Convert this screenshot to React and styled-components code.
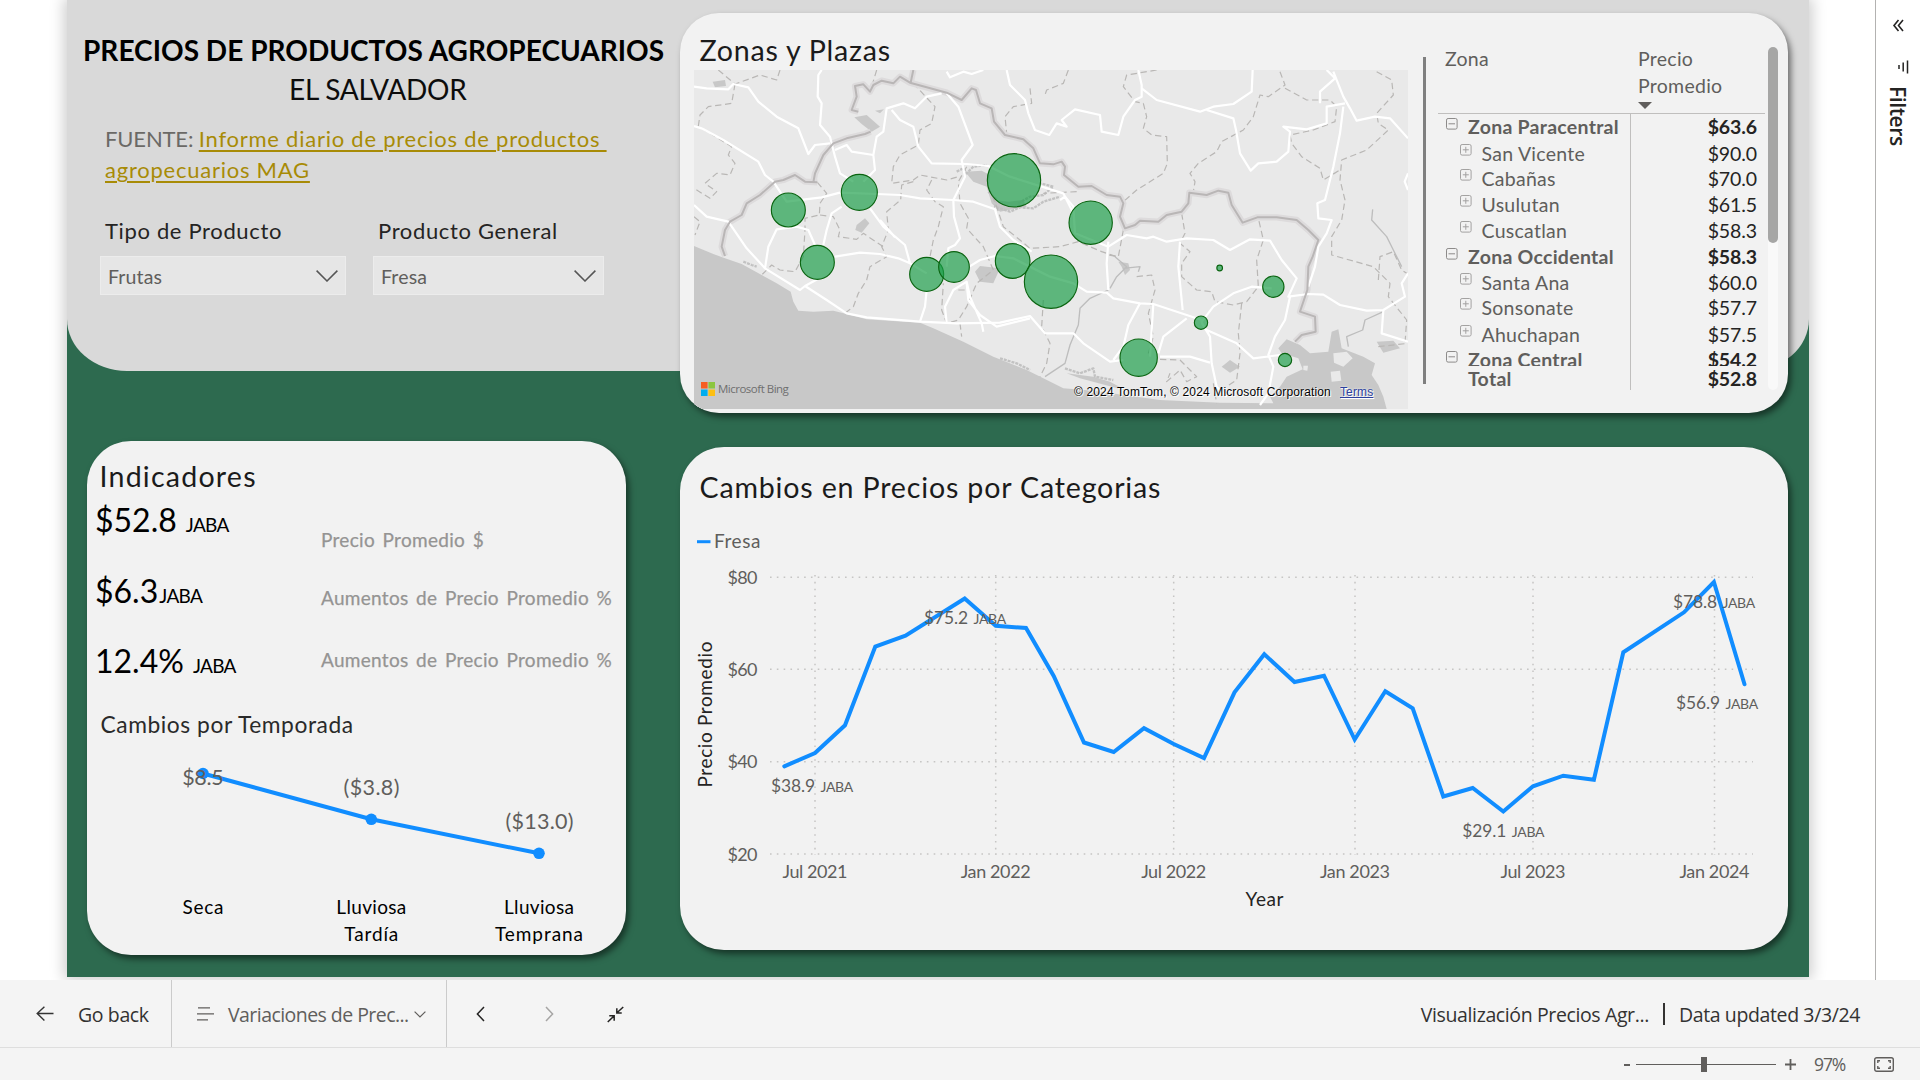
import React from 'react';
import styled, { createGlobalStyle } from 'styled-components';

const GlobalStyle = createGlobalStyle`
  *, *::before { box-sizing: border-box; }
  body { margin: 0; background: #fff; overflow: hidden; font-family: Lato, Carlito, sans-serif; }
  svg { display: block; flex: none; }
`;

/* ---------- page shell ---------- */

const Page = styled.div`
  display: flex;
  flex-direction: column;
  width: 1920px;
  height: 1080px;
`;

const Main = styled.main`
  display: flex;
  justify-content: space-between;
  height: 980px;
  padding-left: 67px;
  overflow: hidden;
`;

const Report = styled.section`
  position: relative;
  display: flex;
  width: 1742px;
  height: 977px;
  background: #2d6a4f;
  box-shadow: 0 0 14px 3px rgba(0, 0, 0, 0.2);

  &::before {
    content: '';
    position: absolute;
    inset: 0 0 auto 0;
    height: 371px;
    background: #d9d9d9;
    border-radius: 0 0 60px 60px / 0 0 52px 52px;
  }
`;

const Column = styled.div`
  position: relative;
  display: flex;
  flex-direction: column;
  width: ${(p) => p.$width}px;
`;

const Card = styled.article`
  background: #f2f2f2;
  border-radius: ${(p) => p.$radius}px;
  box-shadow: 3px 4px 6px rgba(0, 0, 0, 0.5);
  overflow: hidden;
  flex: none;
`;

const CardTitle = styled.h2`
  margin: 0;
  font-size: 28.6px;
  font-weight: 400;
  line-height: 40px;
  color: #1b1b1b;
  white-space: nowrap;
  letter-spacing: ${(p) => p.$track || 0}px;
`;

/* ---------- left column: heading and slicers ---------- */

const ReportTitle = styled.h1`
  margin: 31px 0 0;
  padding-left: 16px;
  font-size: 28px;
  line-height: 39px;
  font-weight: 700;
  color: #000;
  white-space: nowrap;
  letter-spacing: 0.03px;
`;

const Country = styled.div`
  padding-left: 222px;
  font-size: 28px;
  line-height: 39px;
  letter-spacing: -0.25px;
  color: #0c0c0c;
`;

const Source = styled.p`
  margin: 14px 0 0;
  padding-left: 38px;
  font-size: 22px;
  line-height: 31px;
  color: #6b6966;
  letter-spacing: -0.15px;
  white-space: pre;
`;

const SourceLink = styled.a`
  color: #a88b06;
  letter-spacing: 0.76px;
  text-decoration: underline;
  text-decoration-thickness: 1.5px;
  text-underline-offset: 3px;
`;

const Slicers = styled.div`
  display: flex;
  margin-top: 31px;
  padding-left: 33px;
  gap: 27px;
`;

const Slicer = styled.div`
  width: ${(p) => p.$width}px;
`;

const SlicerLabel = styled.div`
  padding-left: 5px;
  font-size: 22px;
  line-height: 30px;
  letter-spacing: 0.65px;
  color: #252423;
`;

const SlicerBox = styled.div`
  display: flex;
  align-items: center;
  justify-content: space-between;
  height: 39px;
  margin-top: 10px;
  padding: 1px 7px 0 7px;
  background: #e6e6e6;
  border: 1px solid #ececec;
  font-size: 19.5px;
  letter-spacing: 0.15px;
  color: #605e5c;
`;

/* ---------- left column: indicators ---------- */

const IndicatorCard = styled(Card)`
  width: 539px;
  height: 514px;
  margin: 146px 0 0 20px;
  padding-top: 15px;
`;

const Inset = styled.div`
  padding-left: ${(p) => p.$left}px;
`;

const Kpis = styled.div`
  display: flex;
  height: 185px;
  padding: 4px 0 0 8px;
`;

const KpiValues = styled.div`
  display: flex;
  flex-direction: column;
  gap: 30.5px;
  width: 226px;
`;

const KpiValue = styled.div`
  height: 40px;
  font-size: 32px;
  line-height: 40px;
  color: #000;
  white-space: nowrap;
`;

const Unit = styled.span`
  margin-left: ${(p) => p.$gap}px;
  font-size: 19px;
  line-height: 1;
  letter-spacing: -0.7px;
`;

const KpiLabels = styled.div`
  padding-top: 26.6px;
`;

const KpiLabel = styled.div`
  font-size: 19px;
  line-height: 26px;
  margin-bottom: ${(p) => p.$after || 0}px;
  color: #959493;
  -webkit-text-stroke: 0.25px #959493;
  letter-spacing: 0.3px;
  word-spacing: 2.4px;
  white-space: nowrap;
`;

const SeasonTitle = styled.h3`
  margin: 27px 0 0;
  padding-left: 13.5px;
  font-size: 22.8px;
  font-weight: 400;
  line-height: 32px;
  letter-spacing: 0.55px;
  color: #2a2a2a;
`;

/* ---------- zones card ---------- */

const ZonesCard = styled(Card)`
  display: flex;
  width: 1108px;
  height: 400px;
  margin-top: 13px;
  padding-left: 14px;
`;

const MapColumn = styled.div`
  width: 714px;
  padding-top: 17px;
`;

const MapFrame = styled.div`
  position: relative;
  width: 714px;
  height: 339px;
  background: #e9e9e9;
`;

const BingMark = styled.div`
  position: absolute;
  left: 7px;
  bottom: 12px;
  display: flex;
  align-items: center;
  gap: 3px;
  height: 17px;
  font-family: 'Open Sans', sans-serif;
  font-size: 11.5px;
  letter-spacing: -0.5px;
  color: #6f6f6f;
  white-space: nowrap;
`;

const Credits = styled.div`
  position: absolute;
  left: 380px;
  bottom: 7px;
  display: flex;
  gap: 9px;
  font-family: 'Liberation Sans', Arial, sans-serif;
  font-size: 12px;
  line-height: 20px;
  letter-spacing: 0.14px;
  color: #000;
  white-space: nowrap;
  text-shadow: 0 0 2px #fff, 1px 1px 0 #fff;
`;

const TermsLink = styled.a`
  color: #2b3f9e;
  text-decoration: underline;
`;

const Divider = styled.div`
  width: 3px;
  height: 327px;
  margin: 44px 12px 0 15px;
  background: #7f7f7f;
`;

const Matrix = styled.div`
  width: 327px;
  height: 345px;
  margin-top: 32px;
  font-size: 19.5px;
  letter-spacing: 0.27px;
  color: #605e5c;
`;

const MatrixHead = styled.div`
  display: flex;
  height: 69px;
  border-bottom: 1px solid #c0bfbe;
  line-height: 27px;
`;

const HeadCell = styled.div`
  width: ${(p) => p.$width}px;
  padding-left: 7px;
`;

const SortArrow = styled.div`
  width: 0;
  margin-top: 3px;
  border: 7.5px solid transparent;
  border-top-color: #605e5c;
  border-bottom-width: 0;
`;

const MatrixBody = styled.div`
  height: 252px;
  overflow: hidden;
`;

const MatrixRow = styled.div`
  display: flex;
  height: ${(p) => p.$height}px;
  line-height: 26px;
  font-weight: ${(p) => (p.$bold ? 700 : 400)};
`;

const NameCell = styled.div`
  display: flex;
  align-items: flex-start;
  width: 193px;
  padding-left: ${(p) => (p.$nested ? 22 : 8)}px;
  gap: ${(p) => (p.$nested ? 9.5 : 10)}px;
  white-space: nowrap;
  border-right: 1px solid #c0bfbe;
`;

const Toggle = styled.svg`
  width: 12px;
  height: 12px;
  margin-top: ${(p) => (p.$nested ? 3 : 4)}px;
  visibility: ${(p) => (p.$hidden ? 'hidden' : 'visible')};
`;

const ValueCell = styled.div`
  flex: 1;
  padding-right: 8px;
  text-align: right;
  letter-spacing: -0.1px;
  color: #252423;
`;

const ScrollTrack = styled.div`
  width: 10px;
  height: 343px;
  margin: 34px 0 0 3px;
  border-radius: 5px;
  background: #f9f9f9;
`;

const ScrollThumb = styled.div`
  height: 196px;
  border-radius: 5px;
  background: #a6a6a5;
`;

/* ---------- trend card ---------- */

const TrendCard = styled(Card)`
  width: 1108px;
  height: 503px;
  margin-top: 34px;
  padding-top: 20px;
`;

/* ---------- filter pane ---------- */

const FilterPane = styled.aside`
  display: flex;
  flex-direction: column;
  align-items: center;
  width: 45px;
  padding-top: 19px;
  border-left: 1px solid #b3b2b1;
`;

const FilterGlyph = styled.svg`
  width: 12px;
  height: 14px;
  margin: 28px 0 0 9px;
`;

const FilterLabel = styled.div`
  writing-mode: vertical-rl;
  margin-top: 12px;
  font-family: 'Open Sans', sans-serif;
  font-size: 21px;
  font-weight: 600;
  line-height: 28px;
  letter-spacing: -0.4px;
  color: #252423;
`;

/* ---------- footer ---------- */

const NavBar = styled.nav`
  display: flex;
  height: 68px;
  background: #f4f4f4;
  border-bottom: 1px solid #dedede;
  font-family: 'Open Sans', sans-serif;
  font-size: 19.5px;
  letter-spacing: -0.38px;
  color: #333231;
  white-space: nowrap;
`;

const NavCell = styled.div`
  display: flex;
  align-items: center;
  width: ${(p) => p.$width}px;
  padding: 1px 0 0 ${(p) => p.$left}px;
  gap: ${(p) => p.$gap}px;
  border-right: ${(p) => (p.$last ? 0 : 1)}px solid #cbcbcb;
`;

const PageName = styled.span`
  letter-spacing: -0.55px;
  color: #605e5c;
  margin-right: -9px;
`;

const CollapseGlyph = styled.svg`
  width: 17px;
  height: 17px;
  margin-left: -7px;
`;

const NavInfo = styled.div`
  display: flex;
  align-items: center;
  margin-left: auto;
  padding: 1px 60px 0 0;
  gap: 14px;
`;

const Pipe = styled.i`
  width: 2px;
  height: 22px;
  background: #333231;
`;

const ZoomBar = styled.div`
  display: flex;
  align-items: center;
  justify-content: flex-end;
  height: 32px;
  padding-right: 26px;
  background: #f4f4f4;
  font-family: 'Open Sans', sans-serif;
  color: #605e5c;
`;

const ZoomTrack = styled.div`
  display: flex;
  align-items: center;
  width: 140px;
  height: 15px;
  margin: 0 9px 0 6px;
  padding-left: 65px;
  background: linear-gradient(#605e5c, #605e5c) center / 100% 1px no-repeat;
`;

const ZoomThumb = styled.div`
  width: 6px;
  height: 15px;
  background: #605e5c;
`;

const ZoomValue = styled.span`
  width: 33px;
  margin: 0 27px 0 18px;
  font-size: 17.5px;
  line-height: 24px;
  letter-spacing: -1.1px;
`;

/* ---------- icons ---------- */

const Chevron = ({ w, h, d, color, sw = 1.5 }) => (
  <svg width={w} height={h} viewBox={`0 0 ${w} ${h}`} fill="none" stroke={color} strokeWidth={sw}>
    <path d={d} />
  </svg>
);

const TreeToggle = ({ open, nested, hidden }) => (
  <Toggle viewBox="0 0 12 12" $nested={nested} $hidden={hidden} fill="none" stroke={nested ? '#a3a2a1' : '#8d8b8a'}>
    <rect x="0.5" y="0.5" width="10.6" height="10.6" rx="1.6" />
    <path d={open ? 'M2.5 5.8H9' : 'M2.8 5.8H8.8M5.8 2.8V8.8'} />
  </Toggle>
);

/* ---------- map ---------- */

const BORDERS = [
  'M135 768L125 740 135 690 150 665 185 645 200 610 240 585 285 545 310 540 345 525 375 545 412 547M400 547L405 520 430 465 460 430 500 415 555 402 572 395',
  'M535 335L515 330 530 290 525 258 550 253 570 275 580 255 605 242 640 250 660 230 690 248 740 262 800 278 845 300 875 265 888 270 900 310 935 325 942 365 975 405 1030 418 1060 445 1080 490 1120 493 1145 485 1155 500 1152 525 1195 560 1235 558 1280 585 1320 590 1330 610 1320 650 1335 685 1365 675 1380 662 1435 665 1460 645 1505 635 1525 610 1528 578 1580 585 1615 572 1645 578 1655 615 1688 668 1732 652 1790 652 1850 660 1885 690 1915 720 1898 770 1885 800 1882 870 1860 935 1905 950 1907 995 1865 1005 1845 1025',
  'M692 248L700 210',
];

const ROADS = [
  'M42 260L80 265 145 268 160 252 205 262 235 305 290 350 355 385 385 462 405 435 450 430',
  'M425 210L415 225 413 290 425 310 420 375 450 410 465 470 480 520 520 545',
  'M42 378L65 385 130 420 235 485 255 525 280 545 320 605 425 592 480 578 590 582 660 585 720 595 820 600 880 605 945 628 960 680 1000 720 1055 755',
  'M800 280L835 320 878 435 845 480 855 530 820 600 822 650 840 715 825 735 805 745 800 800',
  'M785 280L740 290 705 325 670 310 620 325 610 395 590 410 580 465 585 510 550 545',
  'M635 330L660 360 700 380 715 440 755 490 860 492 925 498 990 530 1150 580 1180 640',
  'M465 450L500 435 515 455 580 465',
  'M42 615L80 650 145 665 200 745 255 805 360 870 375 858 440 900 500 940 560 952 720 965 830 970 960 968 1050 948 1095 1000 1180 1000 1210 1030 1290 1085 1330 1080',
  'M255 805L265 740 290 688 350 680 385 690 405 735M430 735L440 690 455 640 485 620M412 838L375 858',
  'M570 625L610 680 675 735 690 790 740 820M600 660L645 712M465 770L540 758 600 762 655 775 690 790',
  'M740 870L735 920 720 965M800 970L795 920 820 870 860 845 870 890 905 970 910 995M860 850L865 900 900 945 950 980 1050 955',
  'M868 800L900 780 945 768 1000 775 1050 800 1110 830 1180 850 1220 875 1280 878 1300 895 1380 910 1420 912 1520 945 1565 960',
  'M980 210L990 255 1035 300 1045 340 1065 390 1108 405 1130 370 1160 380 1145 360 1185 328 1260 345 1265 395 1315 405 1330 350 1365 300 1385 290 1385 255 1375 210',
  'M800 215L810 232 850 215 875 222 910 210M1385 265L1430 300 1560 335 1600 320 1660 312 1715 275 1718 210M1580 330L1660 355 1668 390 1680 460 1712 512 1735 490 1790 485 1825 455 1830 395 1810 380 1880 388 1940 370 1940 320 1995 310',
  'M1940 210L1965 235 1920 275 1920 310M1960 215L1990 290 2010 325 2030 362 2085 350 2130 355 2184 415M1990 320L1980 400 1960 500 1935 600 1912 610 1915 655 1955 660 1940 700 1915 740 1905 800 1885 860',
  'M1140 600L1155 590 1180 620 1185 700 1285 740 1340 705 1400 715 1420 710 1460 725 1520 715 1600 720 1650 750 1710 718 1770 722 1805 780 1850 835 1825 890 1885 882 1930 884 1980 915 2060 932 2110 930 2175 890 2165 850 2184 820',
  'M1285 725L1280 790 1285 870M1500 725L1495 800 1508 930M1380 910L1345 975 1330 1040 1300 1080M1420 912L1410 1070M1520 955L1450 1010 1435 1060M1440 1070L1530 1070 1590 1088M1563 968L1600 920 1660 880 1715 860 1775 865M1565 968L1590 1010 1595 1090 1610 1160 1640 1190M1580 990L1670 1030 1720 1075 1800 1065M1830 890L1815 960 1785 1010 1765 1065 1780 1100 1765 1180 1740 1215M2110 930L2105 1000 2184 1025M2184 520L2174 545 2184 570',
];

const DISTRICTS = [
  'M115 210L165 252 240 225 290 240 300 210M165 252L155 310 85 320 60 345 55 378 155 440 145 465 165 490 150 525 110 520 75 550 110 575 90 595 42 565M42 650L60 665 45 705',
  'M590 210L575 260M700 250L765 320 755 370 720 390 715 435 660 465 640 500 635 550 700 540 720 525 800 540 835 530',
  'M700 545L665 555 662 600 620 635 625 690 605 740 620 770 570 800 560 840 535 880 520 920 495 940M755 540L740 570 765 605 790 620 775 680 760 720 750 770',
  'M412 547L440 580 420 610 418 645 375 655 375 690 370 770 345 815 300 810 275 795 245 825M420 645L460 650 480 690 475 710 530 718 550 700 610 740',
  'M860 500L835 545 840 610 865 655 860 685 910 740 940 810 890 850 860 920 835 960 800 970 785 930 790 850M835 870L860 870M840 970L845 1010',
  'M925 560L950 620 970 680 1020 720 1050 745 1140 740 1195 725 1265 755 1310 770M1090 900L1085 980 1110 1030 1100 1090 1080 1130',
  'M1165 210L1150 250 1100 270 1095 285M1050 265L1055 310 1000 320 975 350 980 400M1190 575L1090 580',
  'M1430 210L1340 225 1330 260 1365 305 1390 310 1400 350 1390 385 1415 405 1460 410 1462 490 1450 520 1370 570 1330 605M1800 215L1815 255 1765 290 1740 285 1720 350 1690 390 1625 425 1610 455 1555 490 1530 520 1545 545 1540 575',
  'M1815 265L1880 300 1950 300 1970 320 1965 365 1900 390 1830 405 1835 430 1865 470 1920 505 1930 540 1980 510M2090 215L2135 240 2140 285 2090 340 2095 370 2125 390 2060 450 1985 480 1980 540 1995 600 1985 660 1955 710 1955 765 2080 800 2130 850 2125 890 2180 960 2175 1030M2095 840L2100 770 2140 755 2165 810 2180 820',
  'M1330 690L1315 770 1285 765M1505 640L1515 700 1500 730 1530 755 1505 790 1505 830 1550 870 1595 875 1605 905 1660 915 1700 905 1735 860 1730 780 1750 720 1735 655M1685 910L1675 1000 1680 1060 1670 1140 1640 1160M1370 830L1415 825 1425 870 1405 940 1420 1010 1405 1060M1440 1078L1500 1080 1550 1130 1520 1145 1500 1110 1460 1145 1470 1120M1600 1150L1610 1210M2095 1040L2184 1030',
];

const RIVERS = 'M1285 870L1230 895 1200 925 1195 975 1170 1035 1155 1090 1095 1130M1290 865L1310 830 1340 800 1305 770M1330 805L1380 800 1375 815M2078 628L2075 660 2120 710 2140 750 2165 800M2110 935L2055 960 2048 990 2000 1010 2005 1040';

const WATER = [
  'M42 738L100 762 135 775 185 792 245 825 290 850 332 875 340 905 355 932 400 935 460 932 500 942 560 958 720 968 760 985 850 1025 940 1070 1040 1110 1090 1135 1150 1165 1240 1172 1440 1200 1620 1208 1780 1210 1770 1190 1800 1160 1820 1130 1868 1108 1855 1075 1805 1060 1795 1045 1820 1018 1860 1035 1890 1060 1945 1055 1955 995 1975 988 1985 1045 2050 1070 2085 1090 2075 1125 2095 1155 2110 1190 2120 1227 42 1227Z',
  'M523 352L560 345 600 380 575 395 545 372Z',
  'M98 245L135 240 138 258 105 262Z',
  'M530 675L555 655 568 670 545 698 526 690Z',
  'M885 815L900 798 960 805 940 850 900 845Z',
  'M855 515L905 512 930 525 925 575 945 600 985 605 1030 600 1040 620 960 635 935 610 920 560 880 545Z',
  'M1625 1100L1650 1080 1680 1100 1650 1118Z',
  'M1160 1120L1240 1130 1290 1145 1340 1172 1200 1135Z',
  'M2090 1025L2140 1022 2160 1045 2110 1058Z',
  'M1315 785L1345 790 1350 810 1335 825 1325 800Z',
  'M585 332L612 328 600 340Z',
];

const BUBBLES = [
  [325, 630, 51], [538, 577, 54], [412, 787, 51], [740, 823, 51], [822, 801, 46],
  [1002, 541, 80], [998, 783, 52], [1113, 845, 80], [1232, 668, 65], [1619, 804, 8.5],
  [1780, 860, 32], [1563, 968, 20], [1376, 1073, 56], [1815, 1080, 20],
];

const ZoneMap = () => (
  <svg width="714" height="339" viewBox="42 210 2142 1017" fill="none" strokeLinejoin="round">
    <rect x="42" y="210" width="2142" height="1017" fill="#e9e9e9" />
    {WATER.map((d) => <path key={d} d={d} fill="#c8c8c8" />)}
    <path d="M1960 1060L2000 1055 2018 1075 1990 1100 1962 1088Z M1952 1115L1980 1112 1984 1142 1955 1145Z M1870 1097L1884 1097 1882 1112 1870 1110Z M1830 1000L1850 990 1862 1005 1840 1015Z" fill="#e9e9e9" />
    <path d="M830 515L850 505 860 520 880 500 920 495M925 575L950 600 945 620 990 635 1020 622 1060 625 1090 605 1140 590M1015 610L1050 590 1090 585 1120 560 1080 550M190 785L215 795 230 800M960 1075L1010 1090 1050 1110M1155 1105L1200 1120 1240 1105 1245 1130 1300 1140" stroke="#c2c2c2" strokeWidth="7" strokeDasharray="9 3" />
    <path d={RIVERS} stroke="#bdbdbd" strokeWidth="4" />
    {DISTRICTS.map((d) => <path key={d} d={d} stroke="#b9b7b5" strokeWidth="3.6" strokeDasharray="19 11" />)}
    {BORDERS.map((d) => <path key={d} d={d} stroke="#dddbdc" strokeWidth="19" />)}
    {ROADS.map((d) => <path key={d} d={d} stroke="#fff" strokeWidth="6.6" />)}
    {BORDERS.map((d) => <path key={d} d={d} stroke="#b9b6b6" strokeWidth="6" />)}
    {BUBBLES.map(([x, y, r]) => (
      <circle key={`${x}-${y}`} cx={x} cy={y} r={r} fill="#1a9e48" fillOpacity="0.68" stroke="#0a6410" strokeWidth="3.4" />
    ))}
  </svg>
);

/* ---------- charts ---------- */

const Tick = styled.text`
  font-size: ${(p) => p.$size || 18}px;
  fill: ${(p) => p.$color || '#605e5c'};
`;

const SEASONS = [
  { x: 203, y: 773.5, label: '$8.5', lx: 182.2, ly: 785.3, lw: 41.5, name: [['Seca', 41]] },
  { x: 371.3, y: 819.3, label: '($3.8)', lx: 343.5, ly: 795, lw: 56, name: [['Lluviosa', 70], ['Tardía', 54]] },
  { x: 539, y: 853.3, label: '($13.0)', lx: 505.5, ly: 829, lw: 68, name: [['Lluviosa', 70], ['Temprana', 88]] },
];

const SeasonChart = () => (
  <svg width="539" height="214" viewBox="87 740 539 214">
    <polyline points={SEASONS.map((s) => `${s.x},${s.y}`).join(' ')} fill="none" stroke="#118dff" strokeWidth="4" />
    {SEASONS.map((s) => <circle key={s.x} cx={s.x} cy={s.y} r="5.8" fill="#118dff" />)}
    {SEASONS.map((s) => (
      <g key={s.x}>
        <Tick $size={21.5} x={s.lx} y={s.ly} textLength={s.lw}>{s.label}</Tick>
        {s.name.map(([word, w], i) => (
          <Tick key={word} $size={19} $color="#000" x={s.x} y={913.7 + i * 27} textAnchor="middle" textLength={w}>{word}</Tick>
        ))}
      </g>
    ))}
  </svg>
);

const PRICES = [
  [784.3, 766.3], [815, 753], [845, 725.3], [875.3, 646.5], [905.5, 635.7], [964.7, 598.5], [995.7, 625.7], [1026, 628],
  [1053.7, 676], [1084, 742.5], [1113.7, 752], [1144, 728.2], [1173.7, 744], [1204, 758], [1234.5, 692.3], [1264.3, 654.3],
  [1294.5, 682], [1324, 675.7], [1354.7, 739.5], [1385.3, 691.3], [1412.7, 708.3], [1443.3, 796.5], [1472.7, 788],
  [1503.3, 811.5], [1533, 786.3], [1563.3, 775.7], [1593.9, 779.7], [1623.3, 652.3], [1684, 612.3], [1713.9, 582], [1744.5, 684.3],
];

const LEVELS = [['$80', 577.2], ['$60', 669.3], ['$40', 761.7], ['$20', 854]];

const MONTHS = [
  ['Jul 2021', 815, 65], ['Jan 2022', 995.7, 70], ['Jul 2022', 1173.7, 65],
  ['Jan 2023', 1355, 70], ['Jul 2023', 1533, 65], ['Jan 2024', 1714.5, 70],
];

const CALLOUTS = [
  ['$75.2', 924, 623.8], ['$78.8', 1673, 608], ['$56.9', 1676, 708.8], ['$38.9', 771, 792], ['$29.1', 1462.3, 837],
];

const TrendChart = () => (
  <svg width="1108" height="442" viewBox="680 507 1108 442">
    <path d="M697 541.7H710.5" stroke="#118dff" strokeWidth="3" />
    <Tick $size={19} x="714" y="547.7" textLength="46.5">Fresa</Tick>
    <g stroke="#c6c5c4" strokeWidth="1.5" strokeDasharray="1.6 5.22">
      {LEVELS.map(([t, y]) => <path key={t} d={`M770 ${y}H1753`} />)}
      {MONTHS.map(([t, x]) => <path key={t} d={`M${x} 575V855`} />)}
    </g>
    <polyline points={PRICES.map((p) => p.join(',')).join(' ')} fill="none" stroke="#118dff" strokeWidth="4" strokeLinecap="round" strokeLinejoin="miter" />
    {LEVELS.map(([t, y]) => <Tick key={t} x="727.5" y={y + 6.5} textLength="30">{t}</Tick>)}
    {MONTHS.map(([t, x, w]) => <Tick key={t} x={x} y="878" textAnchor="middle" textLength={w}>{t}</Tick>)}
    {CALLOUTS.map(([t, x, y]) => (
      <g key={t}>
        <Tick $size={17.4} x={x} y={y} textLength="44">{t}</Tick>
        <Tick $size={14} x={x + 49.5} y={y} textLength="32.7">JABA</Tick>
      </g>
    ))}
    <Tick $size={19} $color="#252423" x="1264.5" y="905.7" textAnchor="middle" textLength="38">Year</Tick>
    <Tick $size={19} $color="#252423" transform="translate(712 787.5) rotate(-90)" textLength="146">Precio Promedio</Tick>
  </svg>
);

/* ---------- data ---------- */

const ROWS = [
  ['Zona Paracentral', '$63.6', true, 27],
  ['San Vicente', '$90.0', false, 25],
  ['Cabañas', '$70.0', false, 26],
  ['Usulutan', '$61.5', false, 26],
  ['Cuscatlan', '$58.3', false, 26],
  ['Zona Occidental', '$58.3', true, 26],
  ['Santa Ana', '$60.0', false, 25],
  ['Sonsonate', '$57.7', false, 27],
  ['Ahuchapan', '$57.5', false, 25],
  ['Zona Central', '$54.2', true, 26],
];

export default function App() {
  return (
    <Page>
      <GlobalStyle />
      <Main>
        <Report>
          <Column $width={613}>
            <ReportTitle>PRECIOS DE PRODUCTOS AGROPECUARIOS</ReportTitle>
            <Country>EL SALVADOR</Country>
            <Source>
              {'FUENTE: '}
              <SourceLink>{'Informe diario de precios de productos \nagropecuarios MAG'}</SourceLink>
            </Source>
            <Slicers>
              <Slicer $width={246}>
                <SlicerLabel>Tipo de Producto</SlicerLabel>
                <SlicerBox>
                  Frutas
                  <Chevron w={22} h={12} d="M.6 .6L11 11 21.4 .6" color="#555" />
                </SlicerBox>
              </Slicer>
              <Slicer $width={231}>
                <SlicerLabel>Producto General</SlicerLabel>
                <SlicerBox>
                  Fresa
                  <Chevron w={22} h={12} d="M.6 .6L11 11 21.4 .6" color="#555" />
                </SlicerBox>
              </Slicer>
            </Slicers>

            <IndicatorCard $radius={44}>
              <Inset $left={12.5}>
                <CardTitle $track={1.2}>Indicadores</CardTitle>
              </Inset>
              <Kpis>
                <KpiValues>
                  <KpiValue>$52.8<Unit $gap={9}>JABA</Unit></KpiValue>
                  <KpiValue>$6.3<Unit $gap={1}>JABA</Unit></KpiValue>
                  <KpiValue>12.4%<Unit $gap={9}>JABA</Unit></KpiValue>
                </KpiValues>
                <KpiLabels>
                  <KpiLabel $after={32.7}>Precio Promedio $</KpiLabel>
                  <KpiLabel $after={35.3}>Aumentos de Precio Promedio %</KpiLabel>
                  <KpiLabel>Aumentos de Precio Promedio %</KpiLabel>
                </KpiLabels>
              </Kpis>
              <SeasonTitle>Cambios por Temporada</SeasonTitle>
              <SeasonChart />
            </IndicatorCard>
          </Column>

          <Column $width={1108}>
            <ZonesCard $radius={39}>
              <MapColumn>
                <Inset $left={5.5}>
                  <CardTitle $track={0.75}>Zonas y Plazas</CardTitle>
                </Inset>
                <MapFrame>
                  <ZoneMap />
                  <BingMark>
                    <svg width="14" height="14" viewBox="0 0 14 14">
                      <path d="M0 0H6.6V6.6H0Z" fill="#f65d22" />
                      <path d="M7.4 0H14V6.6H7.4Z" fill="#8cc63f" />
                      <path d="M0 7.4H6.6V14H0Z" fill="#00adef" />
                      <path d="M7.4 7.4H14V14H7.4Z" fill="#fdbf12" />
                    </svg>
                    Microsoft Bing
                  </BingMark>
                  <Credits>
                    © 2024 TomTom, © 2024 Microsoft Corporation
                    <TermsLink>Terms</TermsLink>
                  </Credits>
                </MapFrame>
              </MapColumn>
              <Divider />
              <Matrix>
                <MatrixHead>
                  <HeadCell $width={193}>Zona</HeadCell>
                  <HeadCell $width={134}>
                    Precio Promedio
                    <SortArrow />
                  </HeadCell>
                </MatrixHead>
                <MatrixBody>
                  {ROWS.map(([name, value, bold, height]) => (
                    <MatrixRow key={name} $bold={bold} $height={height}>
                      <NameCell $nested={!bold}>
                        <TreeToggle open={bold} nested={!bold} />
                        {name}
                      </NameCell>
                      <ValueCell>{value}</ValueCell>
                    </MatrixRow>
                  ))}
                </MatrixBody>
                <MatrixRow $bold $height={24}>
                  <NameCell>
                    <TreeToggle hidden />
                    Total
                  </NameCell>
                  <ValueCell>$52.8</ValueCell>
                </MatrixRow>
              </Matrix>
              <ScrollTrack>
                <ScrollThumb />
              </ScrollTrack>
            </ZonesCard>

            <TrendCard $radius={44}>
              <Inset $left={19.5}>
                <CardTitle $track={0.82}>Cambios en Precios por Categorias</CardTitle>
              </Inset>
              <TrendChart />
            </TrendCard>
          </Column>
        </Report>

        <FilterPane>
          <Chevron w={12} h={13} d="M6.5 1L2 6.5 6.5 12M11 1L6.5 6.5 11 12" color="#252423" sw={1.6} />
          <FilterGlyph viewBox="0 0 12 14" fill="none" stroke="#252423" strokeWidth="1.5">
            <path d="M10.5 .5V13.5M6.2 2.6V11.4M2 5V9" />
          </FilterGlyph>
          <FilterLabel>Filters</FilterLabel>
        </FilterPane>
      </Main>

      <NavBar>
        <NavCell $width={172} $left={36} $gap={24}>
          <svg width="18" height="16" viewBox="0 0 18 16" fill="none" stroke="#333" strokeWidth="1.4">
            <path d="M17.5 7.5H1.2M8.4 .8L1.2 7.5 8.4 14.4" />
          </svg>
          Go back
        </NavCell>
        <NavCell $width={275} $left={25} $gap={14}>
          <svg width="17" height="14" viewBox="0 0 17 14" fill="none" stroke="#605e5c" strokeWidth="1.4">
            <path d="M1 .9H13M0 6.9H17M0 12.9H11" />
          </svg>
          <PageName>Variaciones de Prec...</PageName>
          <Chevron w={12} h={7} d="M.6 .6L6 6 11.4 .6" color="#605e5c" sw={1.2} />
        </NavCell>
        <NavCell $left={29} $gap={60} $last>
          <Chevron w={9} h={16} d="M8 1L1.4 8 8 15" color="#252423" />
          <Chevron w={9} h={16} d="M1 1L7.6 8 1 15" color="#a6a5a4" />
          <CollapseGlyph viewBox="0 0 18 18" fill="none" stroke="#252423" strokeWidth="1.6">
            <path d="M17.2 1L10.6 7.2M10.4 2.4V7.5H15.6M.8 17L7.2 10.8M2.4 10.4H7.6V15.6" />
          </CollapseGlyph>
        </NavCell>
        <NavInfo>
          Visualización Precios Agr...
          <Pipe />
          Data updated 3/3/24
        </NavInfo>
      </NavBar>
      <ZoomBar>
        <svg width="6" height="10" viewBox="0 0 6 10" stroke="#605e5c" strokeWidth="2"><path d="M0 6H6" /></svg>
        <ZoomTrack><ZoomThumb /></ZoomTrack>
        <svg width="11" height="11" viewBox="0 0 11 11" stroke="#605e5c" strokeWidth="1.8"><path d="M0 5.5H11M5.5 0V11" /></svg>
        <ZoomValue>97%</ZoomValue>
        <svg width="20" height="15" viewBox="0 0 20 15" fill="none" stroke="#605e5c" strokeWidth="1.4">
          <rect x=".7" y=".7" width="18.6" height="13.6" rx="2" />
          <path d="M3.8 6V3.8H6M14 3.8H16.2V6M16.2 9V11.2H14M6 11.2H3.8V9" />
        </svg>
      </ZoomBar>
    </Page>
  );
}
